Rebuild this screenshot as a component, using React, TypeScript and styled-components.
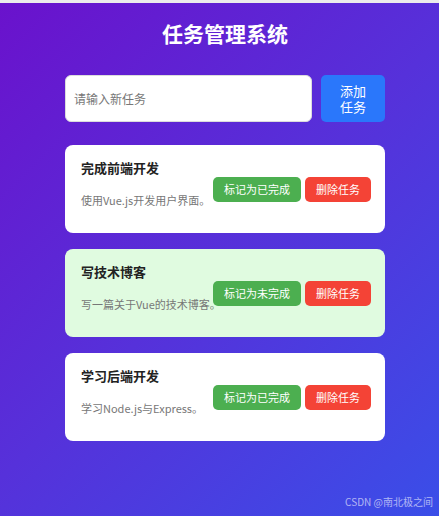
import React, { useState } from "react";
import styled, { createGlobalStyle } from "styled-components";

const GlobalStyle = createGlobalStyle`
    html, body {
        margin: 0;
        padding: 0;
        height: 100%;
    }
    body {
        font-family: "Noto Sans CJK SC", "Noto Sans", "Liberation Sans", sans-serif;
        overflow: hidden;
    }
`;

const TopStrip = styled.div`
    height: 3px;
    background-color: #ececec;
`;

const Page = styled.div`
    height: 513px;
    box-sizing: border-box;
    padding: 14px 54px 0 65px;
    background: linear-gradient(135deg, #6a12cc 0%, #5631da 50%, #3a4ee8 100%);
    display: flex;
    flex-direction: column;
    align-items: center;
    position: relative;
`;

const Container = styled.div`
    width: 320px;
    display: flex;
    flex-direction: column;
`;

const Title = styled.h1`
    margin: 0;
    text-align: center;
    color: #ffffff;
    font-size: 21px;
    line-height: 32px;
    font-weight: 700;
`;

const InputRow = styled.div`
    display: flex;
    gap: 9px;
    margin-top: 26px;
    height: 47px;
`;

const TaskInput = styled.input`
    flex: 1;
    min-width: 0;
    box-sizing: border-box;
    border: 1px solid #dcdcdc;
    border-radius: 6px;
    padding: 0 8px;
    font-family: inherit;
    font-size: 12px;
    color: #333;
    outline: none;
    &::placeholder {
        color: #777;
    }
`;

const AddButton = styled.button`
    width: 64px;
    flex-shrink: 0;
    border: none;
    border-radius: 5px;
    background-color: #2a77fb;
    color: #ffffff;
    font-family: inherit;
    font-size: 13px;
    line-height: 16px;
    padding: 0 16px;
    cursor: pointer;
`;

const TaskList = styled.ul`
    list-style: none;
    margin: 23px 0 0;
    padding: 0;
    display: flex;
    flex-direction: column;
    gap: 16px;
`;

const TaskCard = styled.li<{ $done: boolean }>`
    display: flex;
    align-items: center;
    justify-content: space-between;
    box-sizing: border-box;
    height: 88px;
    padding: 0 14px 0 16px;
    border-radius: 8px;
    background-color: ${(p) => (p.$done ? "#e0fbe0" : "#ffffff")};
`;

const TaskText = styled.div`
    flex: 1;
    min-width: 0;
    display: flex;
    flex-direction: column;
    padding-bottom: 10px;
`;

const TaskTitle = styled.h3`
    margin: 0 0 14px;
    font-size: 13px;
    line-height: 18px;
    font-weight: 700;
    color: #222;
`;

const TaskDesc = styled.p`
    margin: 0;
    font-size: 11px;
    line-height: 18px;
    color: #777;
    white-space: nowrap;
`;

const Actions = styled.div`
    display: flex;
    gap: 4px;
    flex-shrink: 0;
`;

const ActionButton = styled.button<{ $color: string }>`
    height: 25px;
    border: none;
    border-radius: 5px;
    padding: 0 11px;
    background-color: ${(p) => p.$color};
    color: #ffffff;
    font-family: inherit;
    font-size: 11px;
    cursor: pointer;
`;

const Watermark = styled.span`
    position: absolute;
    right: 6px;
    bottom: 7px;
    font-size: 10px;
    color: rgba(255, 255, 255, 0.6);
`;

type Task = {
    id: number;
    title: string;
    desc: string;
    done: boolean;
};

const initialTasks: Task[] = [
    { id: 1, title: "完成前端开发", desc: "使用Vue.js开发用户界面。", done: false },
    { id: 2, title: "写技术博客", desc: "写一篇关于Vue的技术博客。", done: true },
    { id: 3, title: "学习后端开发", desc: "学习Node.js与Express。", done: false },
];

const App: React.FC = () => {
    const [tasks, setTasks] = useState<Task[]>(initialTasks);
    const [text, setText] = useState("");

    const addTask = () => {
        if (!text.trim()) return;
        setTasks([...tasks, { id: Date.now(), title: text, desc: "", done: false }]);
        setText("");
    };

    const toggle = (id: number) =>
        setTasks(tasks.map((t) => (t.id === id ? { ...t, done: !t.done } : t)));

    const remove = (id: number) => setTasks(tasks.filter((t) => t.id !== id));

    return (
        <>
            <GlobalStyle />
            <TopStrip />
            <Page>
                <Container>
                    <Title>任务管理系统</Title>
                    <InputRow>
                        <TaskInput
                            placeholder="请输入新任务"
                            value={text}
                            onChange={(e) => setText(e.target.value)}
                        />
                        <AddButton onClick={addTask}>添加任务</AddButton>
                    </InputRow>
                    <TaskList>
                        {tasks.map((task) => (
                            <TaskCard key={task.id} $done={task.done}>
                                <TaskText>
                                    <TaskTitle>{task.title}</TaskTitle>
                                    <TaskDesc>{task.desc}</TaskDesc>
                                </TaskText>
                                <Actions>
                                    <ActionButton $color="#4caf50" onClick={() => toggle(task.id)}>
                                        {task.done ? "标记为未完成" : "标记为已完成"}
                                    </ActionButton>
                                    <ActionButton $color="#f44336" onClick={() => remove(task.id)}>
                                        删除任务
                                    </ActionButton>
                                </Actions>
                            </TaskCard>
                        ))}
                    </TaskList>
                </Container>
                <Watermark>CSDN @南北极之间</Watermark>
            </Page>
        </>
    );
};

export default App;
